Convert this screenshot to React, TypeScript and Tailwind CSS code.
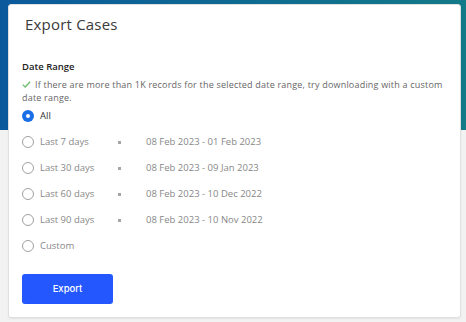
const ranges = [
  { label: 'Last 7 days', dates: '08 Feb 2023 - 01 Feb 2023' },
  { label: 'Last 30 days', dates: '08 Feb 2023 - 09 Jan 2023' },
  { label: 'Last 60 days', dates: '08 Feb 2023 - 10 Dec 2022' },
  { label: 'Last 90 days', dates: '08 Feb 2023 - 10 Nov 2022' },
]

function Radio({ checked }: { checked?: boolean }) {
  if (checked) {
    return (
      <span className="w-[12px] h-[12px] rounded-full bg-[#1a6fe6] flex items-center justify-center shrink-0">
        <span className="w-[4px] h-[4px] rounded-full bg-white" />
      </span>
    )
  }
  return <span className="w-[12px] h-[12px] rounded-full border border-[#a0a0a0] bg-white shrink-0" />
}

export default function App() {
  return (
    <div className="h-[322px] w-[466px] pl-[8px] pr-[5px] pt-[4px] font-['Open_Sans',sans-serif] bg-[linear-gradient(to_bottom,transparent_130px,#f2f2f2_130px),linear-gradient(to_right,#0b5a9c,#137a88)]">
      <div className="h-[314px] bg-white rounded-[3px] border border-[#e0e0e0] shadow-[0_1px_2px_rgba(0,0,0,0.06)]">
        {/* header */}
        <div className="pl-[16px] pt-[9px] h-[44px]">
          <h2 className="text-[15px] leading-[20px] text-[#3a3a3a] tracking-[0.2px]">Export Cases</h2>
        </div>

        <div className="pl-[13px] pr-[14px] pt-[11px]">
          <h3 className="text-[9.5px] font-semibold text-[#222] leading-[14px]">Date Range</h3>
          <p className="mt-[4px] text-[9px] leading-[13px] tracking-[0.2px] text-[#666]">
            <svg width="9" height="7" viewBox="0 0 9 7" className="inline-block mr-[4px] align-[0px]">
              <polyline points="0.8,3.6 3.2,6 8.2,0.8" fill="none" stroke="#6cbf6c" strokeWidth="1.3" />
            </svg>
            If there are more than 1K records for the selected date range, try downloading with a custom date range.
          </p>

          {/* options */}
          <div className="mt-[3px]">
            <label className="flex items-center gap-[6px] h-[18px] text-[9.5px] text-[#333]">
              <Radio checked />
              All
            </label>
            <div className="mt-[4px]">
              {ranges.map((r) => (
                <label key={r.label} className="flex items-center h-[26px] text-[9.5px] text-[#888]">
                  <span className="flex items-center gap-[6px] w-[96px]">
                    <Radio />
                    {r.label}
                  </span>
                  <span className="w-[3px] h-[3px] bg-[#a5a5a5] mr-[25px]" />
                  <span>{r.dates}</span>
                </label>
              ))}
              <label className="flex items-center gap-[6px] h-[26px] text-[9.5px] text-[#888]">
                <Radio />
                Custom
              </label>
            </div>
          </div>

          <button className="mt-[15px] w-[91px] h-[30px] rounded-[3px] bg-[#2457fe] text-white text-[9.5px] font-['Inter',sans-serif] font-medium">
            Export
          </button>
        </div>
      </div>
    </div>
  )
}
